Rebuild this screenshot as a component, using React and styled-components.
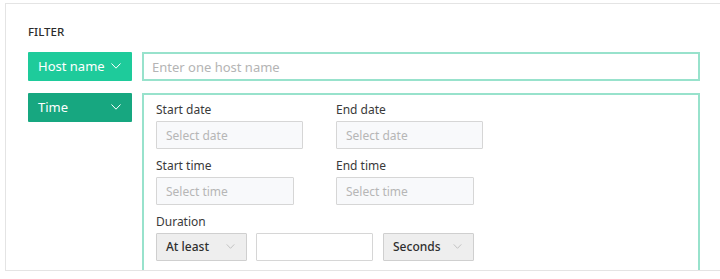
import React from 'react';
import styled, { createGlobalStyle } from 'styled-components';

const GlobalStyle = createGlobalStyle`
  html, body {
    margin: 0;
    padding: 0;
    background: #ffffff;
    font-family: "Noto Sans", "Open Sans", sans-serif;
    color: #333333;
  }
`

const Card = styled.div`
  margin: 3px 0 0 5px;
  height: 268px;
  border: 1px solid #e4e4e4;
  border-right: none;
  overflow: hidden;
  padding: 21px 20px 0 22px;
  box-sizing: border-box;
`

const Heading = styled.div`
  font-size: 11.5px;
  line-height: 14px;
  font-weight: 500;
  color: #2b2b2b;
  margin-bottom: 13px;
`

const FilterRow = styled.div`
  display: grid;
  grid-template-columns: 104px 1fr;
  column-gap: 10px;
  align-items: start;
  margin-bottom: 12px;
`

const FilterButton = styled.button`
  display: flex;
  align-items: center;
  justify-content: space-between;
  height: 29px;
  padding: 0 11px 1px 10px;
  border: none;
  border-radius: 1px;
  background: ${p => (p.$open ? '#17a780' : '#1ecb9b')};
  color: #ffffff;
  font-family: inherit;
  font-size: 13px;
  cursor: pointer;
`

const HostInput = styled.input`
  height: 29px;
  box-sizing: border-box;
  border: 2px solid #98e2cc;
  padding: 0 8px;
  font-family: inherit;
  font-size: 13px;
  color: #333333;
  outline: none;
  &::placeholder {
    color: #b4b4b4;
  }
`

const Panel = styled.div`
  border: 2px solid #98e2cc;
  border-bottom: none;
  height: 190px;
  padding: 7px 12px 0 12px;
  box-sizing: border-box;
  display: flex;
  flex-direction: column;
  gap: 9px;
`

const FieldRow = styled.div`
  display: grid;
  grid-template-columns: 180px 180px;
`

const Field = styled.div`
  display: flex;
  flex-direction: column;
  gap: 3px;
`

const Label = styled.label`
  font-size: 12px;
  line-height: 16px;
  color: #3a3a3a;
`

const TextBox = styled.input`
  width: ${p => p.$w}px;
  height: 28px;
  box-sizing: border-box;
  border: 1px solid #d6d6d6;
  border-radius: 1px;
  background: ${p => (p.$plain ? '#ffffff' : '#f8f9fb')};
  padding: 0 9px;
  font-family: inherit;
  font-size: 12px;
  color: #333333;
  outline: none;
  &::placeholder {
    color: #b6b6b6;
  }
`

const DurationRow = styled.div`
  display: flex;
  gap: 9px;
`

const Select = styled.div`
  width: 91px;
  height: 28px;
  box-sizing: border-box;
  border: 1px solid #cfcfcf;
  border-radius: 1px;
  background: #eeeeee;
  display: flex;
  align-items: center;
  justify-content: space-between;
  padding: 0 11px 1px 9px;
  font-size: 12px;
  font-weight: 500;
  color: #2e2e2e;
  margin-left: ${p => p.$shift || 0}px;
`

const Chevron = ({ color = '#ffffff', w = 10, h = 6 }) => (
  <svg width={w} height={h} viewBox="0 0 10 6" fill="none">
    <path d="M0.5 0.5 L5 5.2 L9.5 0.5" stroke={color} strokeWidth="1" />
  </svg>
)

export default function App() {
  return (
    <>
      <GlobalStyle />
      <Card>
        <Heading>FILTER</Heading>
        <FilterRow>
          <FilterButton>
            Host name
            <Chevron />
          </FilterButton>
          <HostInput placeholder="Enter one host name" />
        </FilterRow>
        <FilterRow>
          <FilterButton $open>
            Time
            <Chevron />
          </FilterButton>
          <Panel>
            <FieldRow>
              <Field>
                <Label>Start date</Label>
                <TextBox $w={147} placeholder="Select date" />
              </Field>
              <Field>
                <Label>End date</Label>
                <TextBox $w={147} placeholder="Select date" />
              </Field>
            </FieldRow>
            <FieldRow>
              <Field>
                <Label>Start time</Label>
                <TextBox $w={138} placeholder="Select time" />
              </Field>
              <Field>
                <Label>End time</Label>
                <TextBox $w={138} placeholder="Select time" />
              </Field>
            </FieldRow>
            <Field>
              <Label>Duration</Label>
              <DurationRow>
                <Select>
                  At least
                  <Chevron color="#b9b9b9" w={9} h={5} />
                </Select>
                <TextBox $w={117} $plain />
                <Select $shift={1}>
                  Seconds
                  <Chevron color="#b9b9b9" w={9} h={5} />
                </Select>
              </DurationRow>
            </Field>
          </Panel>
        </FilterRow>
      </Card>
    </>
  );
}
